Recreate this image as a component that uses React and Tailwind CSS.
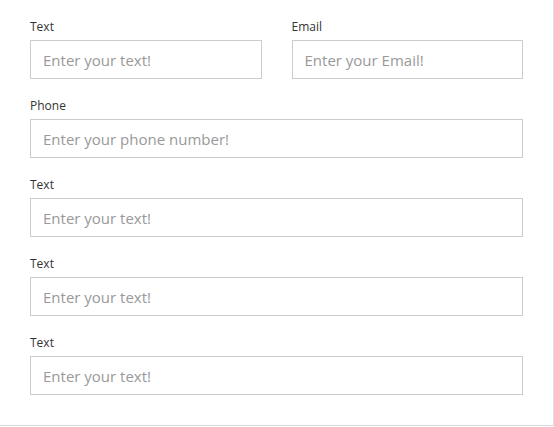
import React from 'react';

const Field = ({ label, placeholder, type = 'text' }) => (
  <label className="flex flex-col">
    <span className="text-[12px] leading-[17px] text-[#333] mb-[5px]">{label}</span>
    <input
      type={type}
      placeholder={placeholder}
      className="h-[39px] w-full border border-[#cccccc] bg-white px-3 text-[15px] text-[#333] placeholder:text-[#999] outline-none"
    />
  </label>
);

const App = () => {
  return (
    <div className="w-[554px] bg-white" style={{ fontFamily: '"Open Sans", "Liberation Sans", sans-serif' }}>
      <form className="border-r border-b border-[#dddddd] px-[30px] pt-[18px] pb-[30px] flex flex-col gap-[18px]">
        <div className="grid grid-cols-2 gap-x-[30px]">
          <Field label="Text" placeholder="Enter your text!" />
          <Field label="Email" placeholder="Enter your Email!" type="email" />
        </div>
        <Field label="Phone" placeholder="Enter your phone number!" type="tel" />
        <Field label="Text" placeholder="Enter your text!" />
        <Field label="Text" placeholder="Enter your text!" />
        <Field label="Text" placeholder="Enter your text!" />
      </form>
    </div>
  );
};

export default App;
